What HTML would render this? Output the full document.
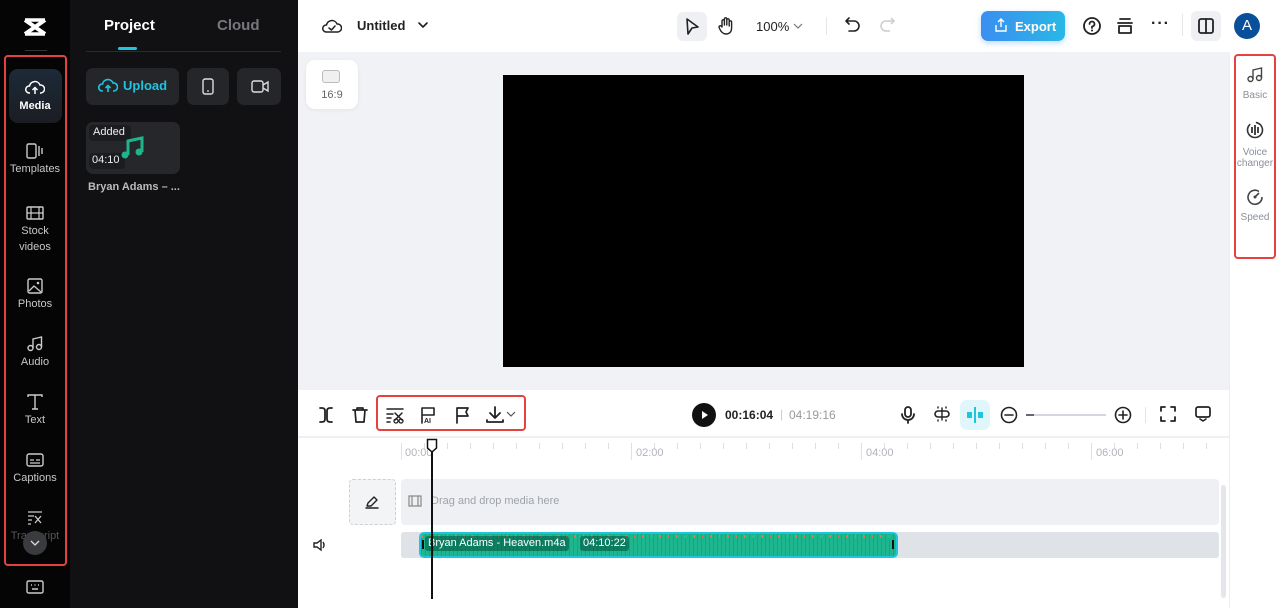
<!DOCTYPE html>
<html><head><meta charset="utf-8"><style>
*{margin:0;padding:0;box-sizing:border-box}
body{width:1280px;height:608px;overflow:hidden;font-family:"Liberation Sans",sans-serif;background:#fff;position:relative}
.a{position:absolute}
.nav{left:0;top:0;width:70px;height:608px;background:#050506}
.panel{left:70px;top:0;width:228px;height:608px;background:#111113}
.ni{position:absolute;left:0;width:70px;text-align:center;color:#c8c8cc;font-size:11px;line-height:16px}
.ni svg{display:block;margin:0 auto 2px}
.red{border:2.5px solid #e5413f;border-radius:4px}
.ic{stroke:#222;fill:none;stroke-width:1.6;stroke-linecap:round;stroke-linejoin:round}
.rp{color:#8a8f99;font-size:10px;text-align:center;width:42px;line-height:11px}
</style></head><body>
<div class="a nav"></div>
<div class="a panel"></div>
<!-- logo -->
<svg class="a" style="left:22px;top:17px" width="26" height="20" viewBox="0 0 26 20"><path d="M3 3 L23 17 M23 3 L3 17" stroke="#fff" stroke-width="4" fill="none"/><path d="M3 3 H23 M3 17 H23" stroke="#fff" stroke-width="3.5"/></svg>
<div class="a" style="left:25px;top:50px;width:22px;height:1px;background:#333"></div>
<div class="a" style="left:9px;top:69px;width:53px;height:54px;border-radius:9px;background:linear-gradient(#1d2a38,#1b1d22)"></div>
<div class="ni" style="top:80px;color:#fff;font-weight:bold"><svg width="20" height="16" viewBox="0 0 20 16"><path d="M5 13 H4 A3.5 3.5 0 0 1 4.5 6 A5.5 5.5 0 0 1 15 5 A4 4 0 0 1 16 13 H15 M10 14 V8 M7.5 10 L10 7.5 L12.5 10" stroke="#fff" stroke-width="1.5" fill="none"/></svg>Media</div>
<div class="ni" style="top:143px"><svg width="20" height="16" viewBox="0 0 20 16"><rect x="2" y="1" width="9" height="14" rx="1.5" stroke="#ccc" stroke-width="1.4" fill="none"/><path d="M14 3V13M17 5V11" stroke="#ccc" stroke-width="1.4"/></svg>Templates</div>
<div class="ni" style="top:205px"><svg width="20" height="16" viewBox="0 0 20 16"><rect x="2" y="2" width="16" height="12" rx="1" stroke="#ccc" stroke-width="1.4" fill="none"/><path d="M6 2V14M14 2V14M2 8H18" stroke="#ccc" stroke-width="1.2"/></svg>Stock<br>videos</div>
<div class="ni" style="top:278px"><svg width="20" height="16" viewBox="0 0 20 16"><rect x="3" y="1" width="14" height="14" rx="1.5" stroke="#ccc" stroke-width="1.4" fill="none"/><path d="M4 13L9 8L16 14" stroke="#ccc" stroke-width="1.3" fill="none"/><circle cx="13" cy="5" r="1.3" fill="#ccc"/></svg>Photos</div>
<div class="ni" style="top:336px"><svg width="20" height="16" viewBox="0 0 20 16"><circle cx="5.5" cy="12" r="2.5" stroke="#ccc" stroke-width="1.4" fill="none"/><circle cx="14" cy="11" r="2.5" stroke="#ccc" stroke-width="1.4" fill="none"/><path d="M8 12V3L16.5 1V11" stroke="#ccc" stroke-width="1.4" fill="none"/></svg>Audio</div>
<div class="ni" style="top:394px"><svg width="20" height="16" viewBox="0 0 20 16"><path d="M3 3V1H17V3M10 1V15M7 15H13" stroke="#ccc" stroke-width="1.4" fill="none"/></svg>Text</div>
<div class="ni" style="top:452px"><svg width="20" height="16" viewBox="0 0 20 16"><rect x="2" y="2" width="16" height="12" rx="2" stroke="#ccc" stroke-width="1.4" fill="none"/><path d="M5 8H9M11 8H15M5 11H15" stroke="#ccc" stroke-width="1.3"/></svg>Captions</div>
<div class="ni" style="top:510px;color:#555"><svg width="20" height="16" viewBox="0 0 20 16"><path d="M3 2H17M3 6H9M3 10H7M3 14H6" stroke="#ccc" stroke-width="1.3"/><path d="M10 6L16 13M16 6L10 13" stroke="#ccc" stroke-width="1.3"/></svg>Transcript</div>
<div class="a" style="left:23px;top:531px;width:24px;height:24px;border-radius:50%;background:#3a3b3f"></div>
<svg class="a" style="left:30px;top:539px" width="10" height="8"><path d="M1 2L5 6L9 2" stroke="#ddd" stroke-width="1.3" fill="none"/></svg>
<div class="a red" style="left:4px;top:55px;width:63px;height:511px"></div>
<svg class="a" style="left:26px;top:580px" width="18" height="14"><rect x="1" y="1" width="16" height="12" rx="1.5" stroke="#ccc" stroke-width="1.4" fill="none"/><path d="M5 5H6M8.5 5H9.5M12 5H13M6 9H12" stroke="#ccc" stroke-width="1.4"/></svg>
<!-- panel -->
<div class="a" style="left:104px;top:17px;color:#fff;font-weight:bold;font-size:15px">Project</div>
<div class="a" style="left:217px;top:17px;color:#77787d;font-weight:bold;font-size:15px">Cloud</div>
<div class="a" style="left:118px;top:47px;width:19px;height:3px;background:#1ec5e0;border-radius:2px"></div>
<div class="a" style="left:86px;top:51px;width:195px;height:1px;background:#2a2b2f"></div>
<div class="a" style="left:86px;top:68px;width:93px;height:37px;border-radius:7px;background:#25262a"></div>
<svg class="a" style="left:98px;top:78px" width="20" height="16" viewBox="0 0 20 16"><path d="M5 13H4A3.5 3.5 0 0 1 4.5 6A5.5 5.5 0 0 1 15 5A4 4 0 0 1 16 13H15M10 14V8M7.5 10L10 7.5L12.5 10" stroke="#1ec5e0" stroke-width="1.6" fill="none"/></svg>
<div class="a" style="left:123px;top:78px;color:#1ec5e0;font-weight:bold;font-size:13px">Upload</div>
<div class="a" style="left:187px;top:68px;width:42px;height:37px;border-radius:7px;background:#25262a"></div>
<svg class="a" style="left:202px;top:78px" width="12" height="17"><rect x="1" y="1" width="10" height="15" rx="2" stroke="#ddd" stroke-width="1.4" fill="none"/><path d="M5 13H7" stroke="#ddd" stroke-width="1.2"/></svg>
<div class="a" style="left:237px;top:68px;width:44px;height:37px;border-radius:7px;background:#25262a"></div>
<svg class="a" style="left:251px;top:80px" width="18" height="13"><rect x="1" y="1" width="11" height="11" rx="2" stroke="#ddd" stroke-width="1.4" fill="none"/><path d="M12 5L17 2V11L12 8" stroke="#ddd" stroke-width="1.4" fill="none"/></svg>
<div class="a" style="left:86px;top:122px;width:94px;height:52px;border-radius:7px;background:#26272b"></div>
<div class="a" style="left:89px;top:125px;width:42px;height:16px;border-radius:4px;background:#1b1c1f;color:#eee;font-size:11px;padding:1px 4px">Added</div>
<div class="a" style="left:89px;top:153px;width:36px;height:16px;border-radius:4px;background:#1b1c1f;color:#eee;font-size:11px;padding:1px 3px">04:10</div>
<svg class="a" style="left:120px;top:135px" width="26" height="26" viewBox="0 0 26 26"><path d="M8 20V6L22 3V17" stroke="#1fb58a" stroke-width="3" fill="none"/><circle cx="5" cy="20" r="3.5" fill="#1fb58a"/><circle cx="19" cy="17" r="3.5" fill="#1fb58a"/></svg>
<div class="a" style="left:88px;top:181px;color:#bbb;font-size:11px;font-weight:bold">Bryan Adams – ...</div>
<div class="a" style="left:298px;top:292px;width:8px;height:52px;background:#2a2b2e;border-radius:0 6px 6px 0"></div>
<!-- top bar -->
<svg class="a" style="left:322px;top:17px" width="20" height="18" viewBox="0 0 20 18"><path d="M5 15H4A3.5 3.5 0 0 1 4.5 8A5.5 5.5 0 0 1 15 7A4 4 0 0 1 16 15Z M7 11L9.5 13L13 9" class="ic" style="stroke-width:1.5"/></svg>
<div class="a" style="left:357px;top:18px;font-size:13px;font-weight:bold;color:#222">Untitled</div>
<svg class="a" style="left:417px;top:21px" width="12" height="8"><path d="M2 2L6 6L10 2" class="ic"/></svg>
<div class="a" style="left:677px;top:12px;width:30px;height:29px;border-radius:6px;background:#eef0f3"></div>
<svg class="a" style="left:684px;top:17px" width="16" height="19"><path d="M3 2L14 10L8 11L4 17Z" class="ic"/></svg>
<svg class="a" style="left:716px;top:16px" width="20" height="20" viewBox="0 0 20 20"><path d="M6 11V5a1.2 1.2 0 0 1 2.4 0V9M8.4 9V3a1.2 1.2 0 0 1 2.4 0V9M10.8 9V4a1.2 1.2 0 0 1 2.4 0V10M13.2 10V6a1.2 1.2 0 0 1 2.4 0V12c0 4-2.5 6-5.5 6S5 16 3.5 12.5L3 11a1.2 1.2 0 0 1 2-1L6 11" class="ic" style="stroke-width:1.4"/></svg>
<div class="a" style="left:756px;top:19px;font-size:13px;color:#222">100%</div>
<svg class="a" style="left:792px;top:22px" width="12" height="8"><path d="M2 2L6 6L10 2" stroke="#777" stroke-width="1.2" fill="none"/></svg>
<div class="a" style="left:826px;top:17px;width:1px;height:18px;background:#e3e5e8"></div>
<svg class="a" style="left:844px;top:16px" width="18" height="20"><path d="M5 2L2 5L5 8M2 5H10A5 5 0 0 1 10 15H5" class="ic"/></svg>
<svg class="a" style="left:878px;top:16px" width="18" height="20"><path d="M13 2L16 5L13 8M16 5H8A5 5 0 0 0 8 15H12" stroke="#ccc" stroke-width="1.5" fill="none"/></svg>
<div class="a" style="left:981px;top:11px;width:84px;height:30px;border-radius:7px;background:linear-gradient(90deg,#3b8ef0,#2ab7e6);box-shadow:0 2px 6px rgba(60,150,240,.35)"></div>
<svg class="a" style="left:994px;top:17px" width="14" height="16"><path d="M7 10V2M4 5L7 2L10 5M2 8V14H12V8" stroke="#fff" stroke-width="1.4" fill="none"/></svg>
<div class="a" style="left:1015px;top:19px;color:#fff;font-weight:bold;font-size:13px">Export</div>
<svg class="a" style="left:1082px;top:16px" width="20" height="20"><circle cx="10" cy="10" r="8" class="ic" style="stroke-width:1.8"/><path d="M7.5 8A2.5 2.5 0 1 1 10 10.5V12" class="ic" style="stroke-width:1.8"/><circle cx="10" cy="14.5" r="1" fill="#222"/></svg>
<svg class="a" style="left:1116px;top:16px" width="18" height="20"><path d="M4 3H14M2 7H16M3 10H15V17H3Z" class="ic" style="stroke-width:1.8"/></svg>
<div class="a" style="left:1151px;top:15px;font-size:16px;font-weight:bold;color:#222;letter-spacing:1px">···</div>
<div class="a" style="left:1182px;top:14px;width:1px;height:22px;background:#e5e7ea"></div>
<div class="a" style="left:1191px;top:11px;width:30px;height:30px;border-radius:6px;background:#eef0f3"></div>
<svg class="a" style="left:1197px;top:17px" width="18" height="18"><rect x="2" y="2" width="14" height="14" rx="2" class="ic" style="stroke-width:1.8"/><path d="M9 2V16" class="ic" style="stroke-width:1.8"/></svg>
<div class="a" style="left:1234px;top:13px;width:26px;height:26px;border-radius:50%;background:#0a4f9a;color:#fff;font-size:15px;text-align:center;line-height:26px">A</div>
<!-- preview -->
<div class="a" style="left:298px;top:52px;width:931px;height:338px;background:#f0f2f5"></div>
<div class="a" style="left:306px;top:60px;width:52px;height:49px;border-radius:9px;background:#fff;box-shadow:0 1px 4px rgba(0,0,0,.06)"></div>
<div class="a" style="left:322px;top:70px;width:18px;height:13px;border:1.5px solid #bbb;border-radius:3px;background:#f0f0f2"></div>
<div class="a" style="left:306px;top:89px;width:52px;text-align:center;font-size:11px;color:#666">16:9</div>
<div class="a" style="left:503px;top:75px;width:521px;height:292px;background:#000"></div>
<!-- right panel -->
<div class="a" style="left:1229px;top:52px;width:51px;height:556px;background:#fff;border-left:1px solid #eee"></div>
<svg class="a" style="left:1245px;top:66px" width="20" height="18" viewBox="0 0 20 16"><circle cx="5.5" cy="12" r="2.5" stroke="#444" stroke-width="1.4" fill="none"/><circle cx="14" cy="11" r="2.5" stroke="#444" stroke-width="1.4" fill="none"/><path d="M8 12V3L16.5 1V11" stroke="#444" stroke-width="1.4" fill="none"/></svg>
<div class="a rp" style="left:1234px;top:90px">Basic</div>
<svg class="a" style="left:1244px;top:120px" width="22" height="20"><circle cx="11" cy="10" r="7.5" stroke="#333" stroke-width="1.6" fill="none" stroke-dasharray="30 6"/><path d="M8 7V13M11 5V15M14 7V13" stroke="#333" stroke-width="1.8"/></svg>
<div class="a rp" style="left:1234px;top:147px">Voice<br>changer</div>
<svg class="a" style="left:1246px;top:188px" width="18" height="18"><path d="M13 3.5A7 7 0 1 0 16 9" stroke="#444" stroke-width="1.6" fill="none"/><path d="M9 9L13 5" stroke="#444" stroke-width="1.6"/><circle cx="9" cy="9" r="1.5" fill="#444"/></svg>
<div class="a rp" style="left:1234px;top:212px">Speed</div>
<div class="a red" style="left:1234px;top:54px;width:42px;height:205px"></div>
<!-- timeline toolbar -->
<div class="a" style="left:298px;top:436px;width:931px;height:2px;background:#eef0f3"></div>
<svg class="a" style="left:318px;top:406px" width="16" height="18"><path d="M2 2H4Q7 2 7 5V13Q7 16 4 16H2M14 2H12Q9 2 9 5V13Q9 16 12 16H14" class="ic" style="stroke-width:1.8"/></svg>
<svg class="a" style="left:351px;top:406px" width="18" height="18"><path d="M2 4H16M6 4V2H12V4M4 4L5 16H13L14 4" class="ic" style="stroke-width:1.7"/></svg>
<svg class="a" style="left:385px;top:406px" width="20" height="18"><path d="M2 3H18M2 8H8M2 12H6M2 16H5" class="ic" style="stroke-width:1.5"/><path d="M10 7L17 14M17 7L10 14" class="ic" style="stroke-width:1.5"/><circle cx="11" cy="15" r="2" class="ic" style="stroke-width:1.3"/><circle cx="16" cy="15" r="2" class="ic" style="stroke-width:1.3"/></svg>
<svg class="a" style="left:420px;top:406px" width="16" height="18"><path d="M2 17V2H14V9M2 9H14" class="ic" style="stroke-width:1.6"/><text x="4" y="17" font-size="7" font-weight="bold" fill="#222" font-family="Liberation Sans">AI</text></svg>
<svg class="a" style="left:454px;top:406px" width="16" height="18"><path d="M3 17V2H14L12 6L14 10H3" class="ic" style="stroke-width:1.7"/></svg>
<svg class="a" style="left:485px;top:405px" width="20" height="20"><path d="M10 2V13M5 8L10 13L15 8M2 15V17H18V15" class="ic" style="stroke-width:1.8"/></svg>
<svg class="a" style="left:506px;top:410px" width="10" height="8"><path d="M1 2L5 6L9 2" stroke="#555" stroke-width="1.2" fill="none"/></svg>
<div class="a red" style="left:376px;top:395px;width:150px;height:36px"></div>
<div class="a" style="left:692px;top:403px;width:24px;height:24px;border-radius:50%;background:#111"></div>
<svg class="a" style="left:701px;top:410px" width="8" height="10"><path d="M1 1L7 5L1 9Z" fill="#fff"/></svg>
<div class="a" style="left:725px;top:408px;font-size:12px;font-weight:bold;color:#222">00:16:04</div>
<div class="a" style="left:780px;top:407px;font-size:12px;color:#ccc">|</div>
<div class="a" style="left:789px;top:408px;font-size:12px;color:#999">04:19:16</div>
<svg class="a" style="left:899px;top:405px" width="18" height="20"><rect x="6" y="2" width="6" height="10" rx="3" class="ic" style="stroke-width:1.8"/><path d="M3 9A6 6 0 0 0 15 9M9 15V18" class="ic" style="stroke-width:1.8"/></svg>
<svg class="a" style="left:932px;top:404px" width="20" height="20"><rect x="3" y="7" width="14" height="6" rx="3" class="ic" style="stroke-width:1.6"/><path d="M10 4V16M6 3V4M14 3V4M6 16V17M14 16V17" class="ic" style="stroke-width:1.4"/></svg>
<div class="a" style="left:960px;top:400px;width:30px;height:30px;border-radius:7px;background:#dff6fb"></div>
<svg class="a" style="left:965px;top:405px" width="20" height="20"><rect x="2" y="7" width="5" height="6" fill="#1ec5e0"/><rect x="13" y="7" width="5" height="6" fill="#1ec5e0"/><path d="M10 2V18" stroke="#1ec5e0" stroke-width="2"/></svg>
<svg class="a" style="left:999px;top:405px" width="20" height="20"><circle cx="10" cy="10" r="7.5" class="ic" style="stroke-width:1.6"/><path d="M6 10H14" class="ic" style="stroke-width:1.6"/></svg>
<div class="a" style="left:1026px;top:414px;width:80px;height:2px;background:#d4d8de"></div>
<div class="a" style="left:1026px;top:414px;width:8px;height:2px;background:#667"></div>
<svg class="a" style="left:1113px;top:405px" width="20" height="20"><circle cx="10" cy="10" r="7.5" class="ic" style="stroke-width:1.6"/><path d="M6 10H14M10 6V14" class="ic" style="stroke-width:1.6"/></svg>
<div class="a" style="left:1145px;top:407px;width:1px;height:16px;background:#e2e4e8"></div>
<svg class="a" style="left:1159px;top:405px" width="18" height="18"><path d="M2 6V2H6M12 2H16V6M16 12V16H12M6 16H2V12" class="ic" style="stroke-width:1.8"/></svg>
<svg class="a" style="left:1194px;top:405px" width="18" height="18"><rect x="2" y="2" width="14" height="10" rx="2" class="ic" style="stroke-width:1.7"/><path d="M6 14L9 16L12 14" class="ic" style="stroke-width:1.6"/></svg>
<!-- ruler -->
<div class="a" style="left:401px;top:443px;width:1px;height:17px;background:#e0e2e6"></div>
<div class="a" style="left:631px;top:443px;width:1px;height:17px;background:#e0e2e6"></div>
<div class="a" style="left:861px;top:443px;width:1px;height:17px;background:#e0e2e6"></div>
<div class="a" style="left:1091px;top:443px;width:1px;height:17px;background:#e0e2e6"></div>
<div class="a" style="left:402px;top:443px;width:820px;height:6px;background:repeating-linear-gradient(90deg,transparent 0 22px,#dcdfe4 22px 23px)"></div>
<div class="a" style="left:405px;top:447px;font-size:11px;color:#b0b4bb">00:00</div>
<div class="a" style="left:636px;top:447px;font-size:11px;color:#b0b4bb">02:00</div>
<div class="a" style="left:866px;top:447px;font-size:11px;color:#b0b4bb">04:00</div>
<div class="a" style="left:1096px;top:447px;font-size:11px;color:#b0b4bb">06:00</div>
<!-- tracks -->
<div class="a" style="left:349px;top:479px;width:47px;height:46px;border:1px dashed #ccd0d6;border-radius:4px;background:#f3f4f6"></div>
<svg class="a" style="left:364px;top:494px" width="16" height="16"><path d="M3 12L4 9L10 3L13 6L7 12ZM2 14H14" class="ic" style="stroke-width:1.4"/></svg>
<div class="a" style="left:401px;top:479px;width:818px;height:46px;background:#eef0f3;border-radius:4px"></div>
<svg class="a" style="left:408px;top:494px" width="14" height="14"><rect x="1" y="2" width="12" height="10" stroke="#888" stroke-width="1.2" fill="none"/><path d="M4 2V12M10 2V12" stroke="#888" stroke-width="1.2"/></svg>
<div class="a" style="left:431px;top:495px;font-size:11px;color:#9ea3aa">Drag and drop media here</div>
<svg class="a" style="left:312px;top:538px" width="16" height="14"><path d="M2 5H5L9 2V12L5 9H2Z M11 4Q13 7 11 10" stroke="#222" stroke-width="1.4" fill="none"/></svg>
<div class="a" style="left:401px;top:532px;width:818px;height:26px;background:#dfe2e6;border-radius:3px"></div>
<div class="a" style="left:419px;top:532px;width:479px;height:26px;background:#1db68e;border:2px solid #1ec5e0;border-radius:5px;overflow:hidden">
<div style="position:absolute;left:0;top:0;width:100%;height:100%;background:repeating-linear-gradient(90deg,#19a37f 0 1px,transparent 1px 4px)"></div>
<div style="position:absolute;left:0;top:1px;width:100%;height:3px;background:repeating-linear-gradient(90deg,#e5793a 0 2px,transparent 2px 9px,#e5793a 9px 10px,transparent 10px 17px)"></div>
</div>
<div class="a" style="left:425px;top:536px;background:rgba(0,80,60,.55);color:#fff;font-size:11px;padding:0 3px;border-radius:3px;line-height:15px">Bryan Adams - Heaven.m4a</div>
<div class="a" style="left:580px;top:536px;background:rgba(0,80,60,.55);color:#fff;font-size:11px;padding:0 3px;border-radius:3px;line-height:15px">04:10:22</div>
<div class="a" style="left:422px;top:540px;width:2px;height:9px;background:#111"></div>
<div class="a" style="left:892px;top:540px;width:2px;height:9px;background:#111"></div>
<!-- playhead -->
<div class="a" style="left:431px;top:450px;width:2px;height:149px;background:#111"></div>
<svg class="a" style="left:426px;top:438px" width="12" height="16"><path d="M1.5 1.5H10.5V10L6 14L1.5 10Z" fill="#fff" stroke="#111" stroke-width="1.5"/></svg>
<div class="a" style="left:1221px;top:485px;width:5px;height:113px;background:#e4e6ea;border-radius:3px"></div>
</body></html>
